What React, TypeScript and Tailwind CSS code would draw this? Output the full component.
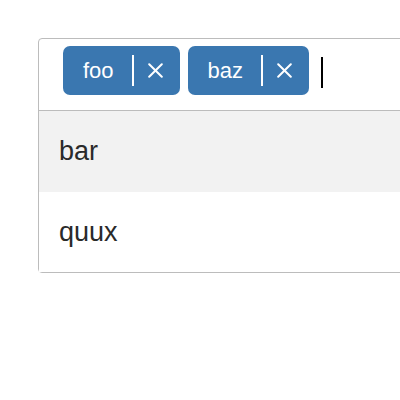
const selected = ['foo', 'baz']
const options = ['bar', 'quux']

function Chip({ label }: { label: string }) {
  return (
    <div className="flex h-[49px] items-center rounded-[7px] bg-[#3a77b0] pl-[20px] pr-[17px] text-white">
      <span className="text-[22px] leading-none">{label}</span>
      <span className="ml-[18px] h-[31px] w-[2px] bg-white" />
      <svg className="ml-[14px]" width="15" height="15" viewBox="0 0 15 15">
        <path d="M1.2 1.2 L13.8 13.8 M13.8 1.2 L1.2 13.8" stroke="white" strokeWidth="2" strokeLinecap="round" />
      </svg>
    </div>
  )
}

export default function App() {
  return (
    <div className="h-[400px] w-[400px] overflow-hidden bg-white font-['Liberation_Sans',Arial,sans-serif]">
      <div className="ml-[38px] mt-[38px] w-[380px] rounded-[4px] border border-[#bcbcbc]">
        <div className="flex h-[72px] items-start gap-[8px] border-b border-[#bcbcbc] pl-[24px] pt-[7px]">
          {selected.map((s) => (
            <Chip key={s} label={s} />
          ))}
          <span className="ml-[4px] mt-[11px] h-[31px] w-[2px] bg-black" />
        </div>
        <div className="flex h-[81px] items-center bg-[#f2f2f2] pl-[20px] text-[27px] text-[#2a2a2a]">
          {options[0]}
        </div>
        <div className="flex h-[80px] items-center bg-white pl-[20px] text-[27px] text-[#2a2a2a]">
          {options[1]}
        </div>
      </div>
    </div>
  )
}
